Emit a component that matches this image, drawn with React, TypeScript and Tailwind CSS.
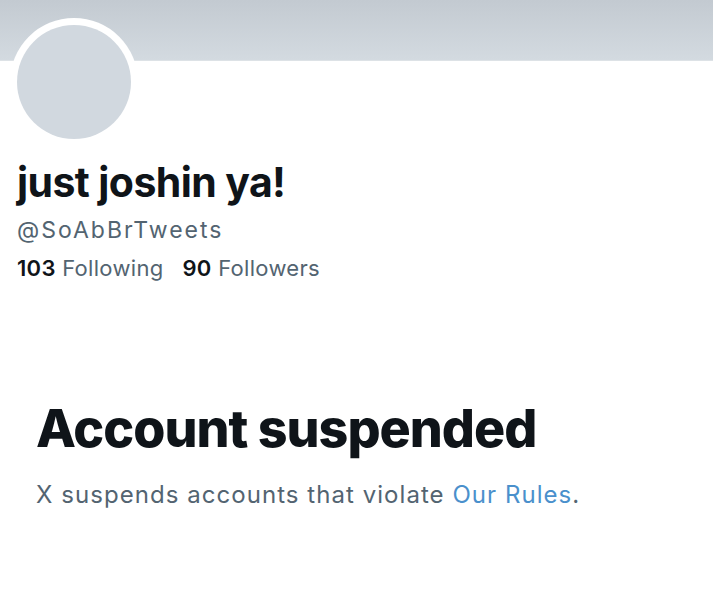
import React from "react";

export default function App() {
  return (
    <div className="w-[713px] h-[600px] bg-white overflow-hidden" style={{ fontFamily: "Inter, 'Noto Sans', sans-serif" }}>
      <div className="h-[61px] bg-gradient-to-b from-[#c3cad1] to-[#d3dae0] border-b border-[#dde2e6]" />
      <div className="ml-[10px] -mt-[43px] w-[128px] h-[128px] rounded-full bg-white p-[7px]">
        <div className="w-full h-full rounded-full bg-[#d1d8df]" />
      </div>
      <div className="pl-[17px] mt-[12px]">
        <div className="text-[41px] leading-[48px] font-bold text-[#0f1419] tracking-[-0.6px]">just joshin ya!</div>
        <div className="text-[23px] leading-[30px] text-[#536471] mt-[9px] tracking-[2px]">@SoAbBrTweets</div>
        <div className="text-[22px] leading-[30px] text-[#536471] mt-[8px] flex gap-[19px] tracking-[0.3px]">
          <span><span className="font-semibold text-[#0f1419]">103</span> Following</span>
          <span><span className="font-semibold text-[#0f1419]">90</span> Followers</span>
        </div>
      </div>
      <div className="pl-[36px] mt-[116px]">
        <div className="text-[52px] leading-[60px] font-extrabold text-[#0f1419] tracking-[-1px]">Account suspended</div>
        <div className="text-[24px] leading-[32px] text-[#536471] mt-[20px] tracking-[1.05px]">
          X suspends accounts that violate <span className="text-[#4a90cc]">Our Rules</span>.
        </div>
      </div>
    </div>
  );
}
